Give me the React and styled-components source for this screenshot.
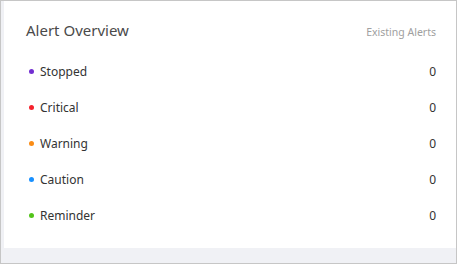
import React from 'react'
import styled, { createGlobalStyle } from 'styled-components'

const GlobalStyle = createGlobalStyle`
    html, body {
        margin: 0;
        padding: 0;
        background: #ffffff;
    }
    * {
        box-sizing: border-box;
    }
`

const alerts = [
    { label: "Stopped", color: "#722ed1", count: 0 },
    { label: "Critical", color: "#f5222d", count: 0 },
    { label: "Warning", color: "#fa8c16", count: 0 },
    { label: "Caution", color: "#1890ff", count: 0 },
    { label: "Reminder", color: "#52c41a", count: 0 },
]

const App = () => {
    return (
        <>
            <GlobalStyle />
            <Frame>
                <Card>
                    <Header>
                        <Title>Alert Overview</Title>
                        <Subtitle>Existing Alerts</Subtitle>
                    </Header>
                    <List>
                        {alerts.map((item) => (
                            <Row key={item.label}>
                                <Label>
                                    <Dot color={item.color} />
                                    {item.label}
                                </Label>
                                <Count>{item.count}</Count>
                            </Row>
                        ))}
                    </List>
                </Card>
            </Frame>
        </>
    )
}

export default App

const Frame = styled.div({
    width: "457px",
    height: "264px",
    border: "1px solid #c6c6c6",
    background: "#f0f1f5",
    padding: "0 0 15px 3px",
    display: "flex",
    fontFamily: '"Noto Sans", "Open Sans", sans-serif',
})

const Card = styled.div({
    flex: 1,
    background: "#ffffff",
    padding: "17px 20px 0 22px",
    display: "flex",
    flexDirection: "column",
})

const Header = styled.div({
    display: "flex",
    justifyContent: "space-between",
    alignItems: "baseline",
    height: "24px",
})

const Title = styled.div({
    fontSize: "15px",
    color: "#4a4a4a",
    lineHeight: "24px",
})

const Subtitle = styled.div({
    fontSize: "10.5px",
    color: "#a0a0a0",
})

const List = styled.div({
    marginTop: "11px",
    display: "flex",
    flexDirection: "column",
})

const Row = styled.div({
    display: "flex",
    justifyContent: "space-between",
    alignItems: "center",
    height: "36px",
    fontSize: "12px",
    color: "#333333",
})

const Label = styled.div({
    display: "flex",
    alignItems: "center",
    paddingLeft: "3px",
})

const Dot = styled.span(({ color }) => ({
    width: "5px",
    height: "5px",
    borderRadius: "50%",
    background: color,
    marginRight: "6px",
}))

const Count = styled.div({
    fontSize: "12px",
})
